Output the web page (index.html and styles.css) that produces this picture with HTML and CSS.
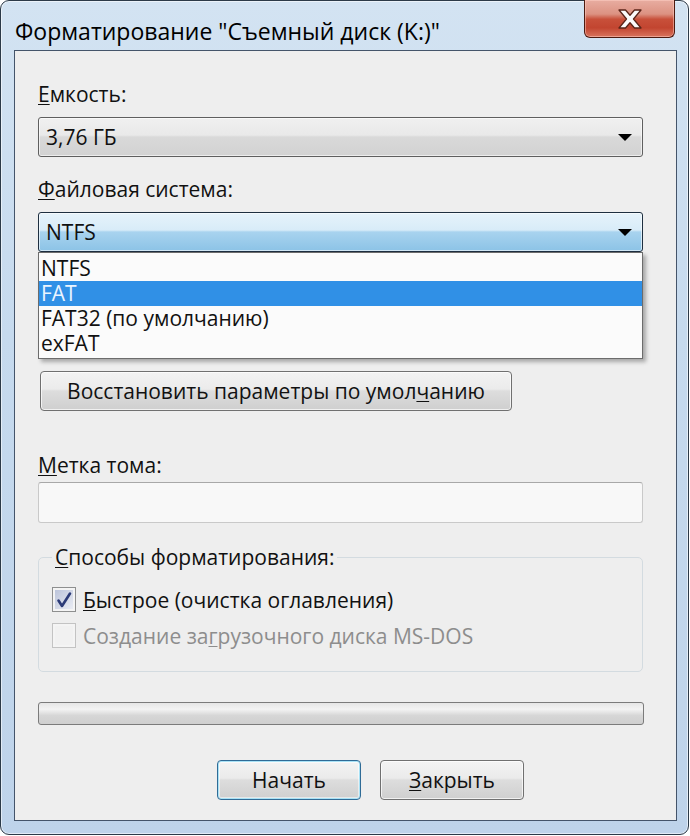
FILE: index.html
```html
<!DOCTYPE html>
<html lang="ru">
<head>
    <meta charset="UTF-8">
    <title>Форматирование</title>
    <link rel="stylesheet" href="styles.css">
</head>
<body>

    <div class="window">
        <!-- Title bar -->
        <div class="titlebar">
            <span class="title">Форматирование "Съемный диск (K:)"</span>
            <button class="close-btn" title="Закрыть">
                <svg width="26" height="20" viewBox="0 0 26 20">
                    <path d="M2 1 L8.5 1 L13 6.2 L17.5 1 L24 1 L16.5 10 L24 19 L17.5 19 L13 13.8 L8.5 19 L2 19 L9.5 10 Z" fill="#fbfbfb" stroke="#5a2418" stroke-width="1.3" stroke-linejoin="round"/>
                </svg>
            </button>
        </div>

        <!-- Dialog body -->
        <div class="client">
            <div class="field">
                <div class="label"><u>Е</u>мкость:</div>
                <div class="combo"><span>3,76 ГБ</span><span class="arrow"></span></div>
            </div>

            <div class="field fs-field">
                <div class="label"><u>Ф</u>айловая система:</div>
                <div class="combo combo-active"><span>NTFS</span><span class="arrow"></span></div>
                <ul class="dropdown">
                    <li>NTFS</li>
                    <li class="selected">FAT</li>
                    <li>FAT32 (по умолчанию)</li>
                    <li>exFAT</li>
                </ul>
            </div>

            <button class="btn btn-restore">Восстановить параметры по умол<u>ч</u>анию</button>

            <div class="label label-volume"><u>М</u>етка тома:</div>
            <input type="text" class="text-input">

            <fieldset class="group">
                <legend><u>С</u>пособы форматирования:</legend>
                <label class="check-row">
                    <span class="checkbox checked">
                        <svg width="18" height="18" viewBox="0 0 18 18">
                            <path d="M3.5 9.5 L7 15 L15 2.5" fill="none" stroke="#2c3b78" stroke-width="2.6" stroke-linecap="round" stroke-linejoin="round"/>
                        </svg>
                    </span>
                    <span><u>Б</u>ыстрое (очистка оглавления)</span>
                </label>
                <label class="check-row disabled">
                    <span class="checkbox"></span>
                    <span>Создание за<u>г</u>рузочного диска MS-DOS</span>
                </label>
            </fieldset>

            <div class="progress"></div>

            <div class="buttons">
                <button class="btn btn-default">Начать</button>
                <button class="btn"><u>З</u>акрыть</button>
            </div>
        </div>
    </div>

</body>
</html>
```

FILE: styles.css
```css
/* Page */
body { margin: 0; background: #fff; font-family: "Open Sans", "Noto Sans", sans-serif; color: #111; }
u { text-decoration-thickness: 1px; text-underline-offset: 2px; }

/* Window frame */
.window { width: 689px; height: 835px; box-sizing: border-box; border: 1px solid #2c3a48; border-radius: 9px; padding: 0 11px 13px 13px; display: flex; flex-direction: column;
    background: linear-gradient(to bottom, #d3e3f2 0%, #c6daee 40%, #bed3ea 100%); box-shadow: inset 0 0 0 1px rgba(255,255,255,.55); }
.titlebar { height: 49px; display: flex; justify-content: space-between; align-items: flex-start; flex-shrink: 0; }
.title { font-size: 23px; line-height: 28px; margin-top: 16px; padding-left: 1px; color: #000; }
.close-btn { width: 91px; height: 38px; margin: -1px 2px 0 0; border: 1px solid #4d1a10; border-top: none; border-radius: 0 0 6px 6px; padding: 0; display: flex; align-items: center; justify-content: center;
    background: linear-gradient(to bottom, #e8ada1 0%, #dc9282 38%, #c8503a 52%, #c24530 75%, #d9745d 100%); box-shadow: inset 0 0 0 1px rgba(255,210,200,.5); }

/* Client area */
.client { flex: 1; border: 1px solid #44546a; background: #eeeeee; padding: 30px 33px 0 23px; display: flex; flex-direction: column; }
.field { margin-bottom: 19px; }
.fs-field { position: relative; }
.label { height: 26px; line-height: 26px; font-size: 21px; margin-bottom: 10px; }

/* Combo boxes */
.combo { height: 40px; box-sizing: border-box; border: 1px solid #5f5f5f; border-radius: 3px; display: flex; align-items: center; justify-content: space-between; padding: 0 8px 0 7px; font-size: 21px;
    background: linear-gradient(to bottom, #f0f0f0 0%, #e9e9e9 45%, #d9d9d9 50%, #d2d2d2 100%); box-shadow: inset 0 0 0 1px rgba(255,255,255,.6); }
.combo-active { border-color: #1e2f40; background: linear-gradient(to bottom, #e6f3fb 0%, #d8ecf8 45%, #a8d3ef 50%, #8cc3e6 100%); }
.arrow { width: 0; height: 0; border-left: 7px solid transparent; border-right: 7px solid transparent; border-top: 7px solid #000; margin-right: 2px; }

/* Dropdown list (open over the next field) */
.dropdown { position: absolute; top: 76px; left: 0; right: 0; height: 107px; box-sizing: border-box; margin: 0; padding: 3px 0 0; list-style: none; background: #fbfbfb; border: 1px solid #6c6c6c; box-shadow: 3px 3px 4px rgba(0,0,0,.3); z-index: 2; }
.dropdown li { height: 25px; line-height: 25px; font-size: 21px; padding-left: 2px; }
.dropdown li.selected { background: #3090e6; color: #eaf4ff; }

/* Buttons */
.btn { font-family: inherit; font-size: 21px; color: #111; height: 40px; border: 1px solid #707070; border-radius: 4px; padding: 0 10px;
    background: linear-gradient(to bottom, #f3f3f3 0%, #ebebeb 45%, #dddddd 50%, #cfcfcf 100%); box-shadow: inset 0 0 0 1px rgba(255,255,255,.7); }
.btn-restore { align-self: flex-start; width: 472px; margin: 100px 0 0 2px; }
.btn-default { border-color: #2f6b96; box-shadow: inset 0 0 0 1px #a9e2f6, inset 0 0 0 2px rgba(255,255,255,.5); }

/* Volume label */
.label-volume { margin: 41px 0 4px; }
.text-input { height: 41px; box-sizing: border-box; border: 1px solid #c9c9c9; border-top-color: #a8a8a8; border-radius: 3px; background: #f8f8f8; font-size: 21px; }

/* Group box */
.group { margin: 23px 0 0; padding: 19px 0 12px 13px; border: 1px solid #d3dbe0; border-radius: 5px; }
.group legend { font-size: 21px; padding: 0 3px; margin-left: 0; line-height: 22px; }
.check-row { display: flex; align-items: center; gap: 7px; font-size: 21px; height: 25px; margin-bottom: 11px; }
.checkbox { width: 24px; height: 25px; box-sizing: border-box; border: 1px solid #8e8f8f; display: flex; align-items: center; justify-content: center;
    background: linear-gradient(135deg, #dcdcdc, #f7f7f7); box-shadow: inset 0 0 0 2px #f4f4f4; }
.checkbox.checked { background: linear-gradient(135deg, #b7c0d8, #eef0f6); }
.disabled { color: #8d8d8d; }
.disabled .checkbox { border-color: #c3c3c3; background: #f1f1f1; }

/* Progress bar */
.progress { margin-top: 30px; height: 23px; box-sizing: border-box; border: 1px solid #7b7b7b; border-radius: 3px; margin-right: -1px;
    background: linear-gradient(to bottom, #e6e6e6 0%, #f3f3f3 30%, #d6d6d6 60%, #cfcfcf 100%); }

/* Bottom buttons */
.buttons { display: flex; justify-content: flex-end; gap: 19px; margin: 35px 119px 0 0; }
.buttons .btn { width: 144px; }
```
